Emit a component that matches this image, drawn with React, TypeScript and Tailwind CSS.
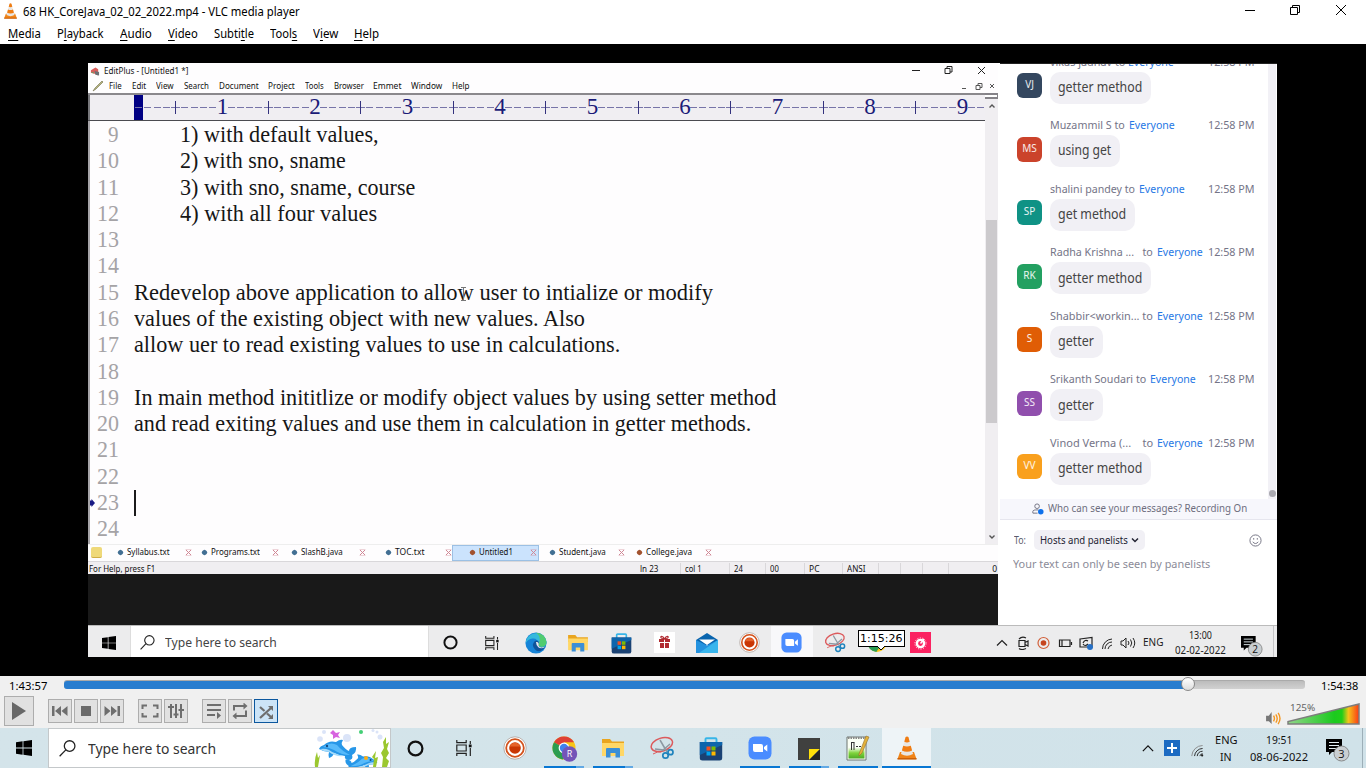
import { useLayoutEffect, useRef } from "react";
import type { ReactNode } from "react";

/* Text set to an exact advance width. */
function Fit({ w, className = "", children }: { w: number; className?: string; children: ReactNode }) {
  const ref = useRef<HTMLSpanElement>(null);
  useLayoutEffect(() => {
    const el = ref.current;
    if (el) el.style.transform = `scaleX(${w / el.offsetWidth})`;
  }, [w]);
  return (
    <span className={"inline-flex shrink-0 whitespace-pre " + className} style={{ width: w }}>
      <span ref={ref} className="inline-block shrink-0 origin-left">{children}</span>
    </span>
  );
}

function Cone({ className }: { className: string }) {
  return (
    <svg viewBox="0 0 20 24" className={className}>
      <path d="M3 16 L0.5 23 H19.5 L17 16Z" fill="#f08418" />
      <path d="M0.5 22 H19.5 V23.6 H0.5Z" fill="#cc5f08" />
      <path d="M8.6 1 Q10 0 11.4 1 L16 18 Q10 21.5 4 18Z" fill="#e9e6e2" />
      <path d="M8.6 1 Q10 0 11.4 1 L12.7 5.8 Q10 7 7.3 5.8Z" fill="#f07c12" />
      <path d="M6.2 9.8 Q10 11.4 13.8 9.8 L15.1 14.6 Q10 17 4.9 14.6Z" fill="#f07c12" />
    </svg>
  );
}

function WinLogo({ className }: { className: string }) {
  return (
    <svg viewBox="0 0 16 16" className={className} fill="#000">
      <path d="M0 2.2 L6.6 1.3 V7.6 H0Z M7.4 1.2 L16 0 V7.6 H7.4Z M0 8.4 H6.6 V14.7 L0 13.8Z M7.4 8.4 H16 V16 L7.4 14.8Z" />
    </svg>
  );
}

function Lens({ className }: { className: string }) {
  return (
    <svg viewBox="0 0 16 16" className={className} fill="none" stroke="#222" strokeWidth="1.2">
      <circle cx="10" cy="5.7" r="5" />
      <path d="M6.4 9.3 L0.6 15.3" />
    </svg>
  );
}

function Ring({ className }: { className: string }) {
  return (
    <svg viewBox="0 0 16 16" className={className}><circle cx="8" cy="8" r="6.5" fill="none" stroke="#111" strokeWidth="2.1" /></svg>
  );
}

function TaskView({ className }: { className: string }) {
  return (
    <svg viewBox="0 0 16 16" className={className} fill="none" stroke="#222" strokeWidth="1.2">
      <path d="M.8 0 V2.6 H10.2 V0 M.8 16 V13.4 H10.2 V16 M.8 5 H10.2 V11 H.8Z M14.3 1 V4 M14.3 8 V16" />
      <path d="M12.8 4.5 h2.8 v2.8 h-2.8z" fill="#111" stroke="none" />
    </svg>
  );
}

function Recorder({ className }: { className: string }) {
  return (
    <svg viewBox="0 0 24 24" className={className}>
      <circle cx="12" cy="12" r="11.2" fill="#fff" stroke="#a99d98" strokeWidth=".8" />
      <circle cx="12" cy="12" r="8.8" fill="none" stroke="#d3521c" strokeWidth="1.8" />
      <circle cx="12" cy="12" r="5.8" fill="#c93604" />
      <path d="M6.8 10.5 a5.500 5.500 0 0 1 10.4 0z" fill="#e5622a" />
    </svg>
  );
}

function Folder({ className }: { className: string }) {
  return (
    <svg viewBox="0 0 22 20" className={className}>
      <path d="M0 1 H8 L10 3.5 H22 V9 H0Z" fill="#e9a51f" />
      <path d="M0 5 H22 V18 H0Z" fill="#ffd766" />
      <path d="M4 19.5 V11 Q4 10 5 10 H17 Q18 10 18 11 V19.5 H13.5 V15 H8.5 V19.5Z" fill="#3b8fd6" />
    </svg>
  );
}

function Snip({ className }: { className: string }) {
  return (
    <svg viewBox="0 0 24 24" className={className} fill="none">
      <ellipse cx="12" cy="8.5" rx="11" ry="6.5" stroke="#dc5a5c" strokeWidth="1.5" transform="rotate(-18 12 9)" />
      <path d="M3 18 Q8 15 11 16" stroke="#dc5a5c" />
      <path d="M10 4 L17 16 M20 8 L12 15 M5 13 L14 14" stroke="#8c98a2" strokeWidth="1.5" />
      <circle cx="15.5" cy="19.5" r="2.7" stroke="#1f83bd" strokeWidth="1.7" />
      <circle cx="20.5" cy="16.2" r="2.5" stroke="#1f83bd" strokeWidth="1.7" />
    </svg>
  );
}

function Store({ className }: { className: string }) {
  return (
    <svg viewBox="0 0 24 24" className={className}>
      <path d="M6.5 6 V2.3 Q6.5 1.2 7.6 1.2 H16.4 Q17.5 1.2 17.5 2.3 V6" fill="none" stroke="#37b5e8" strokeWidth="1.9" />
      <path d="M.8 5 H23.2 V21 Q23.2 23.5 20.5 23.5 H3.5 Q.8 23.5 .8 21Z" fill="#1b4274" />
      <path d="M.8 5 H23.2 V8 L.8 18Z" fill="#0e65ac" />
      <path d="M7.5 9.5h4v4h-4z" fill="#f25022" />
      <path d="M12.5 9.5h4v4h-4z" fill="#7fba00" />
      <path d="M7.5 14.5h4v4h-4z" fill="#00a4ef" />
      <path d="M12.5 14.5h4v4h-4z" fill="#ffb900" />
    </svg>
  );
}

function Zoom({ className }: { className: string }) {
  return (
    <svg viewBox="0 0 24 24" className={className}>
      <rect x=".5" y=".5" width="23" height="23" rx="6" fill="#4a8cff" />
      <path d="M5 8 H13 Q15 8 15 10 V16 H7 Q5 16 5 14Z M16 11 L19.3 8.4 V15.6 L16 13Z" fill="#fff" />
    </svg>
  );
}

function Chrome({ className, badge }: { className: string; badge?: boolean }) {
  return (
    <svg viewBox="0 0 26 26" className={className}>
      <circle cx="12" cy="12" r="11.5" fill="#f9c515" />
      <path d="M12 12 L2 6.2 A11.5 11.5 0 0 1 22 6.2 L12 6.2Z" fill="#df4035" />
      <path d="M12 12 L2 6.2 A11.5 11.5 0 0 0 11 23.5 L16.5 15Z" fill="#2c9d50" />
      <circle cx="12" cy="12" r="5.4" fill="#fff" />
      <circle cx="12" cy="12" r="4.2" fill="#4082ee" />
      {badge && <circle cx="17.5" cy="18" r="7.7" fill="#7454b8" />}
      {badge && <text x="17.5" y="21.300" textAnchor="middle" fontSize="9" fill="#fff" fontFamily="Open Sans, sans-serif">R</text>}
    </svg>
  );
}

function Wifi({ className }: { className: string }) {
  return (
    <svg viewBox="0 0 14 14" className={className} fill="none" stroke="#222">
      <path d="M.8 13 A12 12 0 0 1 12.5 1.6" stroke="#888" />
      <path d="M3.8 13 A9 9 0 0 1 12.5 4.8 M6.7 13 A6 6 0 0 1 12.5 7.8 M9.5 13 A3.5 3.5 0 0 1 12.5 10.4" />
      <circle cx="12" cy="12.3" r="1.2" fill="#222" stroke="none" />
    </svg>
  );
}

function Notice({ className, n }: { className: string; n: string }) {
  return (
    <svg viewBox="0 0 26 24" className={className}>
      <path d="M1 1 H17 V14 H7 L4 17 V14 H1Z" fill="#000" />
      <path d="M4 4.5 H14 M4 7.5 H14 M4 10.5 H11" stroke="#e3edf2" strokeWidth="1" />
      <circle cx="16.5" cy="15.5" r="7.500" fill="#c9ced1" stroke="#777" strokeWidth=".8" />
      <text x="16.5" y="19.5" textAnchor="middle" fontSize="11" fill="#111" fontFamily="Open Sans, sans-serif">{n}</text>
    </svg>
  );
}

function WinButtons() {
  return (
    <svg viewBox="0 0 110 14" className="mr-[14px] mt-[3px] h-[14px] w-[110px]" fill="none" stroke="#000">
      <path d="M3 7.5 H13 M48.5 4.5 H55.500 V11.5 H48.5Z M50.500 4 V2.5 H57.500 V9.5 H56 M94 2 L104 12 M104 2 L94 12" />
    </svg>
  );
}

const vlcMenu: [string, string, string, number, number][] = [
  ["", "M", "edia", 33, 16], ["P", "l", "ayback", 47, 16], ["", "A", "udio", 32, 16], ["", "V", "ideo", 30, 16],
  ["Subti", "t", "le", 40, 16], ["Tool", "s", "", 27, 16], ["V", "i", "ew", 25, 16], ["", "H", "elp", 25, 0],
];

const editMenu: [string, number, number][] = [
  ["File", 13, 10], ["Edit", 14, 10], ["View", 18, 10], ["Search", 25, 10], ["Document", 40, 9], ["Project", 27, 10],
  ["Tools", 19, 10], ["Browser", 30, 9], ["Emmet", 28, 10], ["Window", 31, 10], ["Help", 18, 0],
];

const codeLines: [number, number, string, number][] = [
  [9, 46, "1) with default values,", 199], [10, 46, "2) with sno, sname", 166], [11, 46, "3) with sno, sname, course", 235],
  [12, 46, "4) with all four values", 197], [13, 0, "", 0], [14, 0, "", 0],
  [15, 0, "Redevelop above application to allow user to intialize or modify", 579],
  [16, 0, "values of the existing object with new values. Also", 451],
  [17, 0, "allow uer to read existing values to use in calculations.", 486], [18, 0, "", 0],
  [19, 0, "In main method inititlize or modify object values by using setter method", 642],
  [20, 0, "and read exiting values and use them in calculation in getter methods.", 617],
  [21, 0, "", 0], [22, 0, "", 0], [23, 0, "", 0], [24, 0, "", 0],
];

function Ruler() {
  const cells = Array.from({ length: 92 }, (_, i) => i);
  return (
    <div className="flex h-[28px] w-full shrink-0 border-y border-t-2 border-t-[#8a888c] border-b-[#4b4b50] bg-[#f0eef2]">
      <div className="w-[46px] shrink-0 border-l-2 border-[#77777b]" />
      <div className="flex w-[851px] overflow-hidden">
        {cells.map((i) => (
          <div key={i} className={"flex w-[9.26px] shrink-0 items-center justify-center " + (i === 0 ? "bg-[#000083]" : "")}>
            {i % 10 === 9 ? (
              <span className="-mt-[2px] ml-[1px] font-['Liberation_Serif',serif] text-[23px] leading-none text-[#1b1b78]">{(i + 1) / 10}</span>
            ) : i % 10 === 4 ? (
              <span className="flex h-[14px] w-[9px] items-center justify-center">
                <span className="h-px w-[4px] bg-[#7774a8]" /><span className="h-[13px] w-px bg-[#34327e]" /><span className="h-px w-[4px] bg-[#7774a8]" />
              </span>
            ) : (
              <span className="h-px w-[7px] bg-[#7774a8]" />
            )}
          </div>
        ))}
      </div>
    </div>
  );
}

/* name, tab width, name width, marker offset, red marker, active */
const tabs: [string, number, number, number, boolean, boolean][] = [
  ["Syllabus.txt", 89, 43, 14, false, false], ["Programs.txt", 87, 49, 9, false, false], ["SlashB.java", 87, 42, 12, false, false],
  ["TOC.txt", 86, 29, 19, false, false], ["Untitled1", 87, 34, 17, true, true], ["Student.java", 87, 47, 11, false, false], ["College.java", 87, 46, 11, true, false],
];

const status: [string, number, number][] = [
  ["ln 23", 45, 18], ["col 1", 49, 17], ["24", 36, 9], ["00", 39, 9], ["PC", 38, 11], ["ANSI", 36, 18], ["", 22, 0], ["", 22, 0], ["", 26, 0],
];

function Editor() {
  return (
    <div className="flex h-[511px] w-[910px] flex-col overflow-hidden bg-[#fefdfe] font-['Noto_Sans',sans-serif] text-[8.500px] text-[#111]">
      <div className="flex h-[15px] items-center pt-[1px]">
        <svg viewBox="0 0 11 11" className="ml-[2px] h-[11px] w-[10px]">
          <path d="M1 4 L6 1 L9 3 L9 10 L5 8 L1 7Z" fill="#d95f5c" /><path d="M5 5 L10 6 V10 L6 9Z" fill="#6a7276" /><path d="M1 6 L4 6 L4 8Z" fill="#6d9c62" />
        </svg>
        <Fit w={84} className="ml-1">EditPlus - [Untitled1 *]</Fit>
        <svg viewBox="0 0 76 12" className="-mt-[2px] ml-auto mr-[11px] h-3 w-[76px]" fill="none" stroke="#222">
          <path d="M1 6.500 H9 M34 4.500 H39 V9.500 H34Z M36 4 V2.500 H41 V8 H39 M67 3 L74 10 M74 3 L67 10" />
        </svg>
      </div>
      <div className="flex h-[15px] items-center pt-[1px]">
        <svg viewBox="0 0 12 12" className="ml-1 mr-[5px] h-3 w-3"><path d="M1 11 L3 8 L10 1 L11 2 L4 9Z" fill="#b6b57c" stroke="#6e6c4b" strokeWidth=".6" /></svg>
        {editMenu.map(([t, w, g]) => <span key={t} className="flex" style={{ marginRight: g }}><Fit w={w}>{t}</Fit></span>)}
        <svg viewBox="0 0 36 10" className="ml-auto mr-[2px] h-[10px] w-9" fill="none" stroke="#555">
          <path d="M2 7.500 H6 M16 4.500 H20 V8.500 H16Z M18 4 V2.500 H22 V6.500 H20 M30 3 L34 7 M34 3 L30 7" />
        </svg>
      </div>
      <div className="relative flex h-[451px] shrink-0">
        <div className="flex w-[897px] flex-col overflow-hidden">
          <Ruler />
          <div className="flex grow flex-col overflow-hidden border-l-2 border-[#a6a4a8] pt-[1px] font-['Liberation_Serif',serif] text-[23px] text-[#161616]">
            {codeLines.map(([n, pad, t, w]) => (
              <div key={n} className="flex h-[26.270px] shrink-0 items-center leading-[26px]">
                <span className="flex w-[29px] shrink-0 justify-end text-[#a5a3a6]">{n === 23 && <svg viewBox="0 0 5 8" className="mr-auto mt-[9px] h-2 w-[5px]"><path d="M0 1.500 H1.500 V0 L5 4 L1.500 8 V6.500 H0Z" fill="#191984" /></svg>}<Fit w={n === 9 ? 11 : 22}>{n}</Fit></span>
                <span className="w-[15px] shrink-0" />
                {n === 23 && <span className="h-[26px] w-[2px] bg-[#1b1b1b]" />}
                {t && <span className="flex" style={{ marginLeft: pad }}><Fit w={w}>{t}</Fit></span>}
              </div>
            ))}
          </div>
        </div>
        <div className="flex w-[13px] flex-col items-center bg-[#f0eef1]">
          <div className="h-[6px] w-full border-y-2 border-r border-[#858388] bg-white" />
          <svg viewBox="0 0 8 6" className="mt-[4px] h-[6px] w-2" fill="none" stroke="#555" strokeWidth="1.400"><path d="M1.500 4.500 L4 2 L6.500 4.500" /></svg>
          <div className="mt-[111px] h-[203px] w-[11px] bg-[#cccacd]" />
          <svg viewBox="0 0 8 6" className="mb-[4px] mt-auto h-[6px] w-2" fill="none" stroke="#555" strokeWidth="1.400"><path d="M1.500 1.500 L4 4 L6.500 1.500" /></svg>
        </div>
        <svg viewBox="0 0 7 14" className="absolute left-[372px] top-[194px] h-[14px] w-[7px]" fill="none" stroke="#777"><path d="M1 .5 H6 M3.500 1 V13 M1 13.500 H6" /></svg>
      </div>
      <div className="flex h-[17px] shrink-0 border-t border-[#eee]">
        <div className="flex w-[16px] items-center justify-center"><span className="-mt-[2px] h-[11px] w-[11px] rounded-[2px] border-b border-[#cfae45] bg-[#efd979]" /></div>
        {tabs.map(([t, w, tw, off, red, active], i) => (
          <div key={t} className={"flex items-center pb-[2px] " + (active ? "border border-[#9cc0e4] bg-[#cbe3fd]" : "")} style={{ width: w, marginLeft: i === 4 ? -1 : 0 }}>
            <span className={"h-[5px] w-[5px] shrink-0 rotate-45 rounded-[2px] " + (red ? "bg-[#a2522f]" : "bg-[#426f93]")} style={{ marginLeft: off }} />
            <Fit w={tw} className="ml-[4px]">{t}</Fit>
            <svg viewBox="0 0 7 7" className="ml-auto mr-[1px] h-[7px] w-[7px]" stroke="#d08795" strokeWidth="1" fill="none"><path d="M1 1 L6 6 M6 1 L1 6" /><path d="M.5 .5 H6.500 M.5 6.500 H6.500" opacity=".35" /></svg>
          </div>
        ))}
      </div>
      <div className="flex h-[13px] shrink-0 items-center border-t border-[#d9d7da] bg-[#f0eef1] pt-[1px] leading-3">
        <Fit w={66} className="ml-[1px]">For Help, press F1</Fit>
        <div className="ml-[481px] flex h-full">
          {status.map(([t, w, tw], i) => (
            <div key={i} className="flex items-center border-r border-[#d9d7da] pl-1" style={{ width: w }}>{t && <Fit w={tw}>{t}</Fit>}</div>
          ))}
        </div>
        <span className="ml-auto mr-[1px]">0</span>
      </div>
    </div>
  );
}

type Msg = { name: string; nw: number; gap: number; text: string; tw: number; ini: string; color: string };
const msgs: Msg[] = [
  { name: "vikas jadhav to", nw: 75, gap: 3, text: "getter method", tw: 84, ini: "VJ", color: "bg-[#34475f]" },
  { name: "Muzammil S to", nw: 75, gap: 4, text: "using get", tw: 53, ini: "MS", color: "bg-[#cb432b]" },
  { name: "shalini pandey to", nw: 85, gap: 4, text: "get method", tw: 68, ini: "SP", color: "bg-[#0f9285]" },
  { name: "Radha Krishna ...   to", nw: 103, gap: 4, text: "getter method", tw: 84, ini: "RK", color: "bg-[#23a061]" },
  { name: "Shabbir<workin... to", nw: 103, gap: 4, text: "getter", tw: 36, ini: "S", color: "bg-[#e05d05]" },
  { name: "Srikanth Soudari to", nw: 96, gap: 4, text: "getter", tw: 36, ini: "SS", color: "bg-[#904fad]" },
  { name: "Vinod Verma (...    to", nw: 103, gap: 4, text: "getter method", tw: 84, ini: "VV", color: "bg-[#f9a01d]" },
];

function Chat() {
  return (
    <div className="ml-auto flex h-full w-[277px] flex-col bg-white font-['Noto_Sans',sans-serif]">
      <div className="flex h-[436px] w-full overflow-hidden border-t border-[#222]">
        <div className="-mt-[10px] flex w-[267px] shrink-0 flex-col">
          {msgs.map((m, i) => (
            <div key={i} className="flex h-[63.550px] shrink-0">
              <div className={"ml-[17px] mt-[19px] flex h-[25px] w-[25px] items-center justify-center rounded-[6px] pb-[2px] text-[10px] text-white/90 " + m.color}>{m.ini}</div>
              <div className="ml-[8px] flex flex-col">
                <div className="flex h-[17.500px] items-center pb-[2px] text-[11px] leading-4 text-[#747487]">
                  <Fit w={m.nw}>{m.name}</Fit>
                  <span className="flex text-[#2678e5]" style={{ marginLeft: m.gap }}><Fit w={46}>Everyone</Fit></span>
                </div>
                <div className="flex h-8 items-center self-start rounded-[10px] bg-[#f1f0f5] pb-[1px] pl-[8px] pr-[9px] text-[13.500px] text-[#444]"><Fit w={m.tw}>{m.text}</Fit></div>
              </div>
              <div className="ml-auto mr-[12px] flex h-[17.500px] items-center pb-[2px] text-[11px] leading-4 text-[#747487]"><Fit w={47}>12:58 PM</Fit></div>
            </div>
          ))}
        </div>
        <div className="ml-[1px] flex w-[8px] flex-col items-center justify-end bg-[#f2f1f6] pb-[2px]"><span className="h-[7px] w-[7px] rounded-full bg-[#aaa9b0]" /></div>
      </div>
      <div className="flex h-[21px] items-center border-b border-[#e6e6ee] bg-[#f7f7fc] text-[10.500px] text-[#6e6e7e]">
        <svg viewBox="0 0 13 13" className="ml-[32px] mr-[4px] h-3 w-3" fill="none" stroke="#6e6e7e"><circle cx="5.500" cy="3.500" r="2.500" /><path d="M1 11 Q0 7.500 4 7.500 H7 M1 11 H6" /><circle cx="9.500" cy="9.500" r="3" fill="#0e71eb" stroke="none" /></svg>
        <Fit w={199}>Who can see your messages? Recording On</Fit>
      </div>
      <div className="mt-[10px] flex h-5 items-center text-[11px] text-[#5b5b6b]">
        <Fit w={12} className="ml-[14px]">To:</Fit>
        <div className="ml-[8px] flex h-5 w-[111px] items-center rounded-[5px] bg-[#f1f0f5] pl-[6px] text-[#232333]">
          <Fit w={88}>Hosts and panelists</Fit>
          <svg viewBox="0 0 8 6" className="ml-[3px] h-[6px] w-2" fill="none" stroke="#232333" strokeWidth="1.500"><path d="M1 1.500 L4 4.500 L7 1.500" /></svg>
        </div>
        <svg viewBox="0 0 14 14" className="ml-auto mr-[15px] h-[13px] w-[13px]" fill="none" stroke="#6e6e7e"><circle cx="7" cy="7" r="6" /><path d="M4 8.500 Q7 12 10 8.500" /><path d="M5 4.500 V6 M9 4.500 V6" strokeWidth="1.300" /></svg>
      </div>
      <div className="ml-[13px] mt-[5px] text-[11px] leading-[18px] text-[#8b8b98]"><Fit w={197}>Your text can only be seen by panelists</Fit></div>
    </div>
  );
}

const slot = "flex h-full w-[42.700px] shrink-0 items-center justify-center";

function InnerTaskbar() {
  return (
    <div className="flex h-8 border-t border-[#bbb] bg-[#ececed] font-['Noto_Sans',sans-serif]">
      <div className="flex w-[42px] items-center justify-center pt-[2px]"><WinLogo className="h-[14px] w-[14px]" /></div>
      <div className="flex w-[299px] items-center border-x border-[#ddd] bg-white pl-[9px] pt-[2px] text-[13px] text-[#444]">
        <Lens className="mr-[10px] h-[15px] w-[15px]" /><Fit w={112}>Type here to search</Fit>
      </div>
      <div className={slot + " pt-[2px]"}><Ring className="h-[15px] w-[15px]" /></div>
      <div className={slot + " pt-[2px] pr-[2px]"}><TaskView className="h-[14px] w-[14px]" /></div>
      <div className={slot + " pt-[2px]"}>
        <svg viewBox="0 0 24 24" className="h-[22px] w-[22px]">
          <circle cx="12" cy="12" r="11.500" fill="#1684d8" />
          <path d="M1 10 A11.500 11.500 0 0 1 23.500 11 Q23 17 17 16 Q14 15.500 15 13 Q14 6.500 8 7 Q3 7.500 1 12Z" fill="#35b9dc" />
          <path d="M12 .7 A11.500 11.500 0 0 1 23.500 11 Q23 17 17 16 Q14 15.500 15.500 12 Q18 5 12 .7Z" fill="#51cc70" />
          <path d="M8.500 14 Q10 8.500 14 9.500 Q16 11 15 13 Q14 16 18 16.500 Q21 17 22 16.500 Q16 24 11 19 Q8.500 17 8.500 14Z" fill="#0f549c" />
          <path d="M12 11 Q15 10.500 15 13 Q14 16 18 17 L22 16 Q18 19 14.500 16.500 Q12 14 12 11Z" fill="#ececed" />
        </svg>
      </div>
      <div className={slot + " pt-[2px]"}><Folder className="h-[18px] w-5" /></div>
      <div className={slot + " pt-[3px]"}><Store className="h-[21px] w-[21px]" /></div>
      <div className={slot + " pt-[2px]"}>
        <svg viewBox="0 0 21 21" className="ml-[1px] h-[21px] w-[21px]"><path d="M0 0H21V21H0Z" fill="#fff" /><path d="M5 7 H10 V10 H5Z M11 7 H16 V10 H11Z M6 11 H10 V16 H6Z M11 11 H15 V16 H11Z" fill="#b02a30" /><path d="M10.500 7 Q6 6.500 7 4.500 Q9 4 10.500 7 Q12 4 14 4.500 Q15 6.500 10.500 7" fill="none" stroke="#b02a30" strokeWidth="1.200" /></svg>
      </div>
      <div className={slot + " pt-[2px]"}>
        <svg viewBox="0 0 22 20" className="ml-[1px] h-5 w-[22px]"><path d="M0 7 L11 0 L22 7 V12 H0Z" fill="#0864ae" /><path d="M3 6.500 H19 L11 12Z" fill="#fff" /><path d="M0 7 L11 12.500 L22 7 V20 H0Z" fill="#2492df" /><path d="M22 7 V20 H3Z" fill="#38b5ed" /></svg>
      </div>
      <div className={slot + " pt-[2px]"}><Recorder className="h-[21px] w-[21px]" /></div>
      <div className={slot + " bg-[#f8f8fa] pt-[2px]"}><Zoom className="h-[21px] w-[21px]" /></div>
      <div className={slot + " pt-[2px]"}><Snip className="h-[21px] w-[22px]" /></div>
      <div className={slot + " relative pt-[2px]"}>
        <Chrome className="ml-[2px] h-[22px] w-[22px]" />
        <div className="absolute left-[2px] top-[4px] flex h-[17px] w-[47px] items-center justify-center border border-black bg-white font-['DejaVu_Sans',sans-serif] text-[10.500px] text-black"><Fit w={42}>1:15:26</Fit></div>
        <svg viewBox="0 0 8 5" className="absolute left-[21px] top-[20px] h-[5px] w-2"><path d="M0 0 L4 4 L8 0" fill="#fff" stroke="#000" /></svg>
      </div>
      <div className={slot + " pt-[2px]"}>
        <svg viewBox="0 0 21 21" className="ml-[1px] h-[21px] w-[21px]"><path d="M0 0H21V21H0Z" fill="#fb2261" /><circle cx="10.500" cy="11.500" r="3.600" fill="none" stroke="#fff" strokeWidth="2.400" /><circle cx="10.500" cy="11.500" r="5.600" fill="none" stroke="#fff" strokeDasharray="1 1.500" /><path d="M10.500 11.500 L14 7" stroke="#fff" strokeWidth="1.400" /></svg>
      </div>
      <div className="ml-auto flex items-center">
        <svg viewBox="0 0 140 14" className="mr-[7px] mt-[2px] h-[14px] w-[140px]" fill="none" stroke="#222" strokeWidth="1.200">
          <path d="M1 9.500 L6 4.500 L11 9.500" />
          <path d="M23 4.500 H29 V10.500 H23Z M29 6.500 L32 5 V10 L29 8.500 M23 3 Q26 0 30 2 M23 12.500 Q26 14.500 30 12.500" />
          <circle cx="47.500" cy="7" r="5.500" stroke="#d2603a" /><circle cx="47.500" cy="7" r="2.800" fill="#c6441e" stroke="none" />
          <path d="M63.500 4 H74 V10.500 H63.500Z M75.500 6 V9 M66 4 V10" />
          <path d="M84 3 L96 1.500 V11 H84Z M87 7 Q89 3 92 5 M92 8 Q89 11 87 8" /><circle cx="94" cy="11" r="3" fill="#2670c6" stroke="none" />
          <path d="M106.500 13 A10 10 0 0 1 116 3 M109 13 A7 7 0 0 1 116 6 M112 13 A5 5 0 0 1 116 9" strokeWidth="1" />
          <path d="M125 5 H127 L130 2 V12 L127 9 H125Z M132 5 Q134 7 132 9 M134.500 3.500 Q137 7 134.500 10.500 M137 2 Q140.500 7 137 12" strokeWidth="1" />
        </svg>
        <Fit w={20} className="mr-[11px] mt-[2px] text-[11px] text-[#222]">ENG</Fit>
        <div className="mt-[2px] flex w-[52px] flex-col items-center text-[10.500px] leading-[15px] text-[#222]"><Fit w={23}>13:00</Fit><Fit w={51}>02-02-2022</Fit></div>
        <Notice className="ml-[14px] mr-[9px] mt-[8px] h-[22px] w-[24px]" n="2" />
        <span className="h-full w-[4px] border-l border-[#c5c5c7]" />
      </div>
    </div>
  );
}

const btn = "flex h-6 w-6 shrink-0 items-center justify-center border border-[#adadad] bg-[#e1e1e1]";

function Controls() {
  return (
    <div className="flex h-[52px] shrink-0 flex-col bg-[#f0f0f0] font-['Noto_Sans',sans-serif]">
      <div className="flex h-5 items-center text-[11px] text-black">
        <Fit w={38} className="ml-[9px]">1:43:57</Fit>
        <div className="relative mb-[3px] ml-[17px] flex h-[9px] w-[1241px] rounded-[3px] border-t border-[#aaa] bg-linear-to-b from-[#bcbcbc] to-[#d1d1d1]">
          <div className="h-full w-[1124px] rounded-l-[3px] bg-[#287dcf]" />
          <div className="absolute -top-[4px] left-[1117px] h-[14px] w-[14px] rounded-full border border-[#888] bg-linear-to-b from-[#fff] to-[#ddd]" />
        </div>
        <Fit w={37} className="ml-[16px]">1:54:38</Fit>
      </div>
      <div className="flex h-[30px] items-center pl-1">
        <div className="mr-[14px] flex h-[30px] w-[30px] items-center justify-center border border-[#adadad] bg-[#e1e1e1]"><svg viewBox="0 0 14 18" className="h-[18px] w-[14px]"><path d="M0 0 L14 9 L0 18Z" fill="#686868" /></svg></div>
        <div className="flex gap-[2px]">
          <div className={btn}><svg viewBox="0 0 16 12" className="h-3 w-4" fill="#6e6e6e"><path d="M0 1H2.500V11H0Z M9 1V11L3 6Z M15.500 1V11L9.500 6Z" /></svg></div>
          <div className={btn}><span className="h-[10px] w-[10px] bg-[#6a6a6a]" /></div>
          <div className={btn}><svg viewBox="0 0 16 12" className="h-3 w-4" fill="#6e6e6e"><path d="M13.500 1H16V11H13.500Z M7 1V11L13 6Z M.5 1V11L6.500 6Z" /></svg></div>
        </div>
        <div className="ml-[14px] flex gap-[2px]">
          <div className={btn}><svg viewBox="0 0 18 14" className="h-[14px] w-[18px]" fill="none" stroke="#6e6e6e" strokeWidth="2"><path d="M1.500 5 V1.500 H6 M12 1.500 H16.500 V5 M16.500 9 V12.500 H12 M6 12.500 H1.500 V9" /></svg></div>
          <div className={btn}><svg viewBox="0 0 18 14" className="h-[14px] w-[18px]" fill="none" stroke="#6e6e6e" strokeWidth="2"><path d="M4 0 V14 M9 0 V14 M14 0 V14 M1 3 H7 M6.500 10.500 H11.500 M11.500 6 H17" /></svg></div>
        </div>
        <div className="ml-[14px] flex gap-[2px]">
          <div className={btn}><svg viewBox="0 0 16 16" className="h-4 w-4" fill="#6e6e6e"><path d="M1 1H15V3H1Z M1 6H15V8H1Z M1 11H9V13H1Z M11 9L15 12.500L11 16Z" /></svg></div>
          <div className={btn}><svg viewBox="0 0 16 16" className="h-4 w-4" fill="none" stroke="#6e6e6e" strokeWidth="2"><path d="M2 7.500 V3 H13 M14 7.500 V13 H3" /><path d="M11.500 -.5L15.500 3L11.500 6.500Z M4.500 9.500L.5 13L4.500 16.500Z" fill="#6e6e6e" stroke="none" /></svg></div>
          <div className="flex h-6 w-6 items-center justify-center border border-[#0b579e] bg-[#cce4f7]"><svg viewBox="0 0 16 16" className="ml-[2px] mt-[2px] h-4 w-4" fill="none" stroke="#6e6e6e" strokeWidth="2.300"><path d="M1 14 L12 4 M1 3 L5.500 7 M8 9.500 L12 13" /><path d="M9 2H14V7Z M14 10V15H9Z" fill="#6e6e6e" stroke="none" /></svg></div>
        </div>
        <svg viewBox="0 0 16 14" className="ml-auto mr-[6px] mt-[15px] h-[13px] w-[15px]" fill="none"><path d="M0 4H3L6 0V13L3 10H0Z" fill="#777" /><path d="M8 4Q10 7 8 10 M10.500 2.500Q13.500 7 10.500 11.500 M13 1Q17 7 13 13" stroke="#f6971f" strokeWidth="1.500" /></svg>
        <div className="relative mr-[6px] mt-[6px] h-[22px] w-[73px]">
          <svg viewBox="0 0 73 22" className="h-[22px] w-[73px]"><defs><linearGradient id="vol"><stop offset="0" stopColor="#91d58a" /><stop offset=".65" stopColor="#1cca1f" /><stop offset=".76" stopColor="#20ce19" /><stop offset=".85" stopColor="#f4c51a" /><stop offset="1" stopColor="#fb3916" /></linearGradient></defs><path d="M1 21 V18.500 L72 1 V21Z" fill="url(#vol)" stroke="#7d7d7d" strokeWidth="1.500" /></svg>
          <span className="absolute -top-px left-[3px] flex text-[9.500px] leading-[12px] text-[#666]"><Fit w={25}>125%</Fit></span>
        </div>
      </div>
    </div>
  );
}

function Dolphin() {
  return (
    <>
      <path d="M0 8 Q1 5 5 4 Q10 -1 17 1 Q21 -2 24 -1 Q22 2 23 4 Q27 9 30 10 Q30 6 37 6 Q38 11 33 14 Q35 19 29 19 Q25 18 26 15 Q20 15 15 12 Q14 16 10 17 Q9 14 10 11 Q5 11 0 8Z" fill="#2797e8" />
      <path d="M4 6 Q11 0 18 4 Q23 10 31 14 Q22 14 15 9 Q9 6 4 6Z" fill="#57bafa" />
      <path d="M1 8 Q6 7 10 9 Q16 13 25 15 Q16 16 10 11 Q5 11 1 8Z" fill="#a5dbfb" />
      <circle cx="8" cy="5" r="1.200" fill="#134a83" />
    </>
  );
}

function Dolphins() {
  return (
    <svg viewBox="0 0 76 38" className="h-[38px] w-[76px] shrink-0">
      <g fill="#dbe4f8"><circle cx="6" cy="10" r="2.800" /><circle cx="10" cy="3" r="2" /><circle cx="33" cy="9" r="4" /><circle cx="66" cy="8" r="2.500" /><circle cx="59" cy="1.500" r="1.500" /><circle cx="63" cy="3" r="1.500" /></g>
      <path d="M19 1 L22 4 L26 3 L24 6 L26 9 L22 8 L19 10 L19 6 L16 4Z" fill="#d763df" />
      <g transform="translate(5 12)"><Dolphin /></g>
      <g transform="translate(64 21) rotate(183) scale(.86 -.8) translate(0 8)"><Dolphin /></g>
      <circle cx="47" cy="3" r="2" fill="#43cf75" /><circle cx="52" cy="29" r="2" fill="#ffac11" />
      <g fill="#9bc72f"><path d="M1 38 Q0 30 3 23 L4 29 L6 26 L4 38Z" /><path d="M59 38 L60 30 L58 28 L62 22 L61 29 L64 28 L62 38Z" /><path d="M68 38 L69 28 L67 24 L70 19 L69 13 L72 8 L72 15 L75 13 L73 20 L75 24 L72 29 L75 32 L73 38Z" /></g>
    </svg>
  );
}

const big = "relative flex h-full w-[49px] shrink-0 items-center justify-center";
function Under({ split, full }: { split?: boolean; full?: boolean }) {
  return <span className={"absolute bottom-0 flex h-[2px] bg-[#0877d3] " + (full ? "left-0 w-full" : "left-[5px] w-10")}>{split && <span className="ml-auto h-full w-2 bg-[#62a9e4]" />}</span>;
}

function Taskbar() {
  return (
    <div className="flex h-10 shrink-0 bg-linear-to-r from-[#d4e4ea] via-[#d3e4ea] to-[#d0e2e9] font-['Noto_Sans',sans-serif]">
      <div className="flex w-12 items-center justify-center"><WinLogo className="h-4 w-4" /></div>
      <div className="flex w-[343px] items-center border border-[#c4c8ca] bg-white pl-[10px] text-[15px] text-[#333]">
        <Lens className="mr-3 h-[17px] w-[17px]" /><Fit w={128}>Type here to search</Fit>
        <div className="ml-auto self-end"><Dolphins /></div>
      </div>
      <div className={big + " mr-[1px]"}><Ring className="h-[17px] w-[17px]" /></div>
      <div className={big}><TaskView className="mr-1 h-4 w-4" /></div>
      <div className={big}><Recorder className="h-6 w-6" /></div>
      <div className={big}><Chrome className="ml-[3px] mt-[2px] h-[26px] w-[26px]" badge /><Under split /></div>
      <div className={big}><Folder className="h-5 w-[22px]" /><Under split /></div>
      <div className={big}><Snip className="h-6 w-6" /></div>
      <div className={big}><Store className="mt-px h-6 w-6" /></div>
      <div className={big}><Zoom className="h-6 w-6" /><Under /></div>
      <div className={big}><svg viewBox="0 0 22 22" className="mt-[2px] h-[22px] w-[22px]"><path d="M0 0H22V11L11 22H0Z" fill="#40403f" /><path d="M11 11H22L11 22Z" fill="#ffe009" /><path d="M22 11V22H11Z" fill="#252525" /></svg><Under split /></div>
      <div className={big}>
        <svg viewBox="0 0 24 26" className="h-[26px] w-6"><defs><linearGradient id="note" x2="0" y2="1"><stop offset=".4" stopColor="#fbfff6" /><stop offset=".7" stopColor="#7fd43c" /><stop offset="1" stopColor="#4ea926" /></linearGradient></defs><path d="M1 2H20V25H1Z" fill="#f9fff3" stroke="#6f7772" /><path d="M2.500 5H18.500V23.500H2.500Z" fill="url(#note)" /><path d="M2 3H19" stroke="#888" strokeDasharray="1.500 1" strokeWidth="2" /><path d="M5.500 7.500V15 M8 7.500V15 M5 7.500H8.500 M10 11.500H12 M13 11.500H15" stroke="#333" /><path d="M13 19L20 1L23 2L16 18L13 21Z" fill="#e3b23b" stroke="#94702d" strokeWidth=".6" /></svg><Under />
      </div>
      <div className={big + " bg-[#eef4f7]"}><Cone className="h-6 w-5" /><Under full /></div>
      <div className="ml-auto flex items-center text-[11.500px] leading-[17px] text-[#111]">
        <svg viewBox="0 0 14 8" className="h-[7px] w-[12px]" fill="none" stroke="#111" strokeWidth="1.400"><path d="M1 7 L7 1 L13 7" /></svg>
        <svg viewBox="0 0 16 16" className="ml-[10px] h-4 w-4"><path d="M0 0H16V16H0Z" fill="#1d6bc2" /><path d="M3 8H13M8 3V13" stroke="#fff" strokeWidth="2" /></svg>
        <Wifi className="ml-[11px] mt-1 h-[13px] w-[13px]" />
        <div className="ml-[9px] flex w-[26px] flex-col items-center"><Fit w={23}>ENG</Fit><Fit w={12}>IN</Fit></div>
        <div className="ml-[10px] flex w-[60px] flex-col items-center"><Fit w={26}>19:51</Fit><Fit w={58}>08-06-2022</Fit></div>
        <Notice className="ml-[16px] mt-1 h-6 w-[26px]" n="3" />
        <span className="ml-[11px] h-10 w-[4px] border-l border-[#9dafb8]" />
      </div>
    </div>
  );
}

export default function App() {
  return (
    <div className="flex h-[768px] w-[1366px] flex-col overflow-hidden bg-black">
      <div className="flex h-6 shrink-0 bg-white font-['Noto_Sans',sans-serif] text-[12px] leading-6 text-black">
        <Cone className="ml-[3px] mr-[4px] mt-[3px] h-4 w-[15px]" />
        <Fit w={277} className="ml-[1px]">68 HK_CoreJava_02_02_2022.mp4 - VLC media player</Fit>
        <div className="ml-auto"><WinButtons /></div>
      </div>
      <div className="flex h-5 shrink-0 items-center bg-white pl-2 font-['Noto_Sans',sans-serif] text-[12px] leading-5 text-black">
        {vlcMenu.map(([a, u, b, w, g]) => (
          <span key={a + u + b} className="flex" style={{ marginRight: g }}><Fit w={w}>{a}<span className="underline underline-offset-2">{u}</span>{b}</Fit></span>
        ))}
      </div>
      <div className="flex h-[632px] shrink-0 bg-black pl-[88px] pt-[19px]">
        <div className="flex h-[594px] w-[1189px] flex-col bg-white">
          <div className="flex h-[562px] shrink-0">
            <div className="flex w-[910px] flex-col bg-[#191919]"><Editor /></div>
            <Chat />
          </div>
          <InnerTaskbar />
        </div>
      </div>
      <Controls />
      <Taskbar />
    </div>
  );
}
